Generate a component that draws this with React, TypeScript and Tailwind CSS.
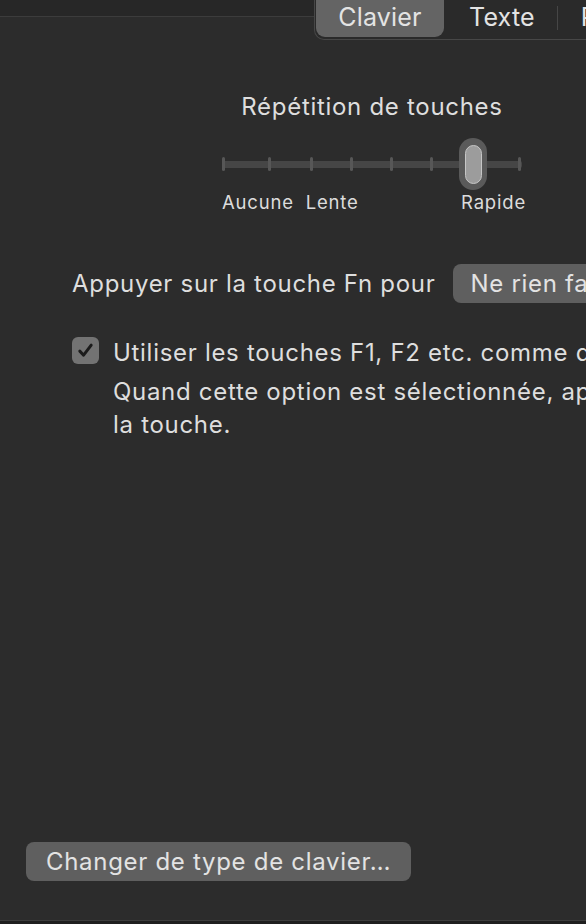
import React from 'react';

// tick gaps measured from the slider (px between 3px ticks)
const tickGaps = [0, 43, 39, 37, 37, 37, 37, 45];

function Segments() {
    return (
        <div className="flex items-start h-[40px] shrink-0">
            <div className="w-[314px] shrink-0 h-[17px] bg-[#272727] border-b border-[#3c3c3c]" />
            <div className="shrink-0 w-[320px] h-[40px] bg-[#2a2a2a] border-l border-b border-[#474747] rounded-bl-[10px] flex items-start pl-[1px] text-[25px] tracking-[0.2px] leading-[30px] text-[#e3e3e3]">
                <div className="shrink-0 w-[128px] h-[46px] -mt-[9px] bg-[#646464] rounded-[9px] flex items-end justify-center pb-[5px]">
                    Clavier
                </div>
                <div className="shrink-0 ml-[25px] mt-[2px]">Texte</div>
                <div className="shrink-0 ml-[22px] mt-[6px] w-[1px] h-[24px] bg-[#464646]" />
                <div className="shrink-0 ml-[23px] mt-[2px]">Raccourcis</div>
            </div>
        </div>
    );
}

function KeyRepeat() {
    return (
        <div className="ml-[222px] w-[300px] mt-[52px] flex flex-col">
            <p className="text-center text-[24px] tracking-[0.7px] leading-[30px] text-[#dedede]">Répétition de touches</p>
            {/* slider */}
            <div className="relative mt-[16px] h-[52px] flex items-center">
                <div className="w-full h-[7px] bg-[#464646] rounded-[2px] flex items-center">
                    {tickGaps.map((g, i) => (
                        <div key={i} style={{ marginLeft: g }} className="w-[3px] h-[14px] bg-[#575757] rounded-[2px] shrink-0" />
                    ))}
                </div>
                <div className="absolute left-[237px] top-0 w-[28px] h-[52px] rounded-full bg-[#5a5a5a] flex items-center justify-center">
                    <div className="w-[17px] h-[39px] rounded-full bg-[#9c9c9c] border border-[#c6c6c6]" />
                </div>
            </div>
            <div className="flex mt-[1px] text-[18.5px] tracking-[0.8px] leading-[22px] text-[#dcdcdc]">
                <span>Aucune</span>
                <span className="ml-[12px]">Lente</span>
                <span className="ml-auto -mr-[4px]">Rapide</span>
            </div>
        </div>
    );
}

export default function App() {
    return (
        <div className="w-[586px] h-[924px] overflow-hidden bg-[#2c2c2c] flex flex-col font-['Inter',sans-serif] whitespace-nowrap text-[24px] tracking-[0.7px] leading-[30px]">
            <Segments />
            <KeyRepeat />

            <div className="flex items-center mt-[51px] ml-[72px] h-[39px]">
                <span className="text-[#dedede] shrink-0">Appuyer sur la touche Fn pour</span>
                <div className="ml-[18px] h-[39px] pl-[17px] pr-[40px] bg-[#5f5f5f] rounded-[8px] flex items-center text-[#e3e3e3] shrink-0">
                    Ne rien faire
                </div>
            </div>

            <div className="flex items-start mt-[35px] ml-[72px]">
                <div className="w-[27px] h-[27px] mt-[-1px] rounded-[6px] bg-[#737373] flex items-center justify-center shrink-0">
                    <svg width="19" height="19" viewBox="0 0 18 18" fill="none">
                        <path d="M3.6 9.6 L7.2 13.4 L14.4 3.9" stroke="#1b1b1b" strokeWidth="2.8" strokeLinecap="round" strokeLinejoin="round" />
                    </svg>
                </div>
                <div className="ml-[14px] flex flex-col text-[#dedede]">
                    <span>Utiliser les touches F1, F2 etc. comme des touches de fonction standard</span>
                    <span className="leading-[33px] mt-[7px]">Quand cette option est sélectionnée, appuyez sur la touche Fn pour utiliser</span>
                    <span className="leading-[33px]">la touche.</span>
                </div>
            </div>

            <div className="mt-auto ml-[26px] mb-[39px] w-[385px] h-[39px] bg-[#5f5f5f] rounded-[8px] flex items-center pl-[20px] text-[#e3e3e3]">
                Changer de type de clavier…
            </div>
            <div className="h-[4px] border-t border-[#3d3d3d] bg-[#1f1f1f]" />
        </div>
    );
}
